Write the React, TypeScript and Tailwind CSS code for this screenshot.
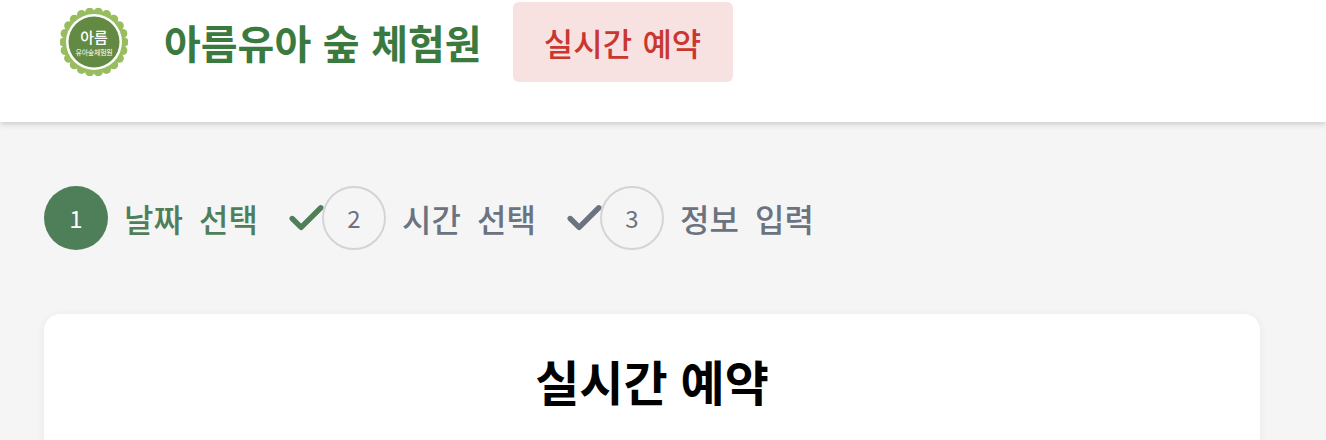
import { Check } from "lucide-react";

const font = "font-['Noto_Sans_CJK_KR','Noto_Sans',sans-serif]";

const steps = [
  { n: 1, label: "날짜 선택", active: true },
  { n: 2, label: "시간 선택", active: false },
  { n: 3, label: "정보 입력", active: false },
];

// scalloped badge edge
const bumps = Array.from({ length: 22 }, (_, i) => {
  const a = (i / 22) * Math.PI * 2;
  return { x: 34 + 30 * Math.cos(a), y: 34 + 30 * Math.sin(a) };
});

function Logo() {
  return (
    <svg width="68" height="68" viewBox="0 0 68 68">
      <circle cx="34" cy="34" r="30" fill="#98bd5e" />
      {bumps.map((b, i) => (
        <circle key={i} cx={b.x} cy={b.y} r="4.6" fill="#98bd5e" />
      ))}
      <circle cx="34" cy="34" r="28" fill="#ffffff" />
      <circle cx="34" cy="34" r="25.5" fill="#638a42" />
      <text x="34" y="35" textAnchor="middle" fill="#fff" fontSize="15" fontWeight="500">아름</text>
      <text x="34" y="47" textAnchor="middle" fill="#fff" fontSize="7" letterSpacing="-0.3">유아숲체험원</text>
    </svg>
  );
}

export default function App() {
  return (
    <div className={`h-[440px] overflow-hidden bg-[#f5f5f5] ${font}`}>
      <header className="flex h-[122px] items-start bg-white pl-[60px] shadow-[0_2px_6px_rgba(0,0,0,0.18)]">
        <div className="mt-[8px]"><Logo /></div>
        <h1 className="mt-[14px] ml-[36px] text-[40px] leading-[56px] font-semibold text-[#3a7a3f] [word-spacing:2.5px]">아름유아 숲 체험원</h1>
        <div className="mt-[2px] ml-[31px] flex h-[80px] w-[220px] items-center justify-center rounded-md bg-[#f8e1e1] text-[32px] font-medium text-[#c9372f] [word-spacing:3px]">
          실시간 예약
        </div>
      </header>
      <main className="px-[44px]">
        <div className="mt-[64px] flex items-center">
          {steps.map((s) => (
            <div key={s.n} className="flex items-center">
              <div className={`flex h-[64px] w-[64px] items-center justify-center rounded-full text-[24px] ${s.active ? "bg-[#4f7f58] text-white" : "border-2 border-[#d4d4d8] text-[#6b7280]"}`}>
                {s.n}
              </div>
              <span className={`ml-[16px] text-[32px] leading-[44px] font-medium [word-spacing:9px] ${s.active ? "text-[#4f7f58]" : "text-[#6b7280]"}`}>{s.label}</span>
              {s.n < 3 && <Check className={`ml-[27px] -mr-[6px] h-[43px] w-[43px] ${s.active ? "text-[#4f7f58]" : "text-[#6b7280]"}`} strokeWidth={3} />}
            </div>
          ))}
        </div>
        <section className="mt-[64px] h-[200px] w-[1216px] rounded-[16px] bg-white pt-[32px] text-center shadow-[0_2px_8px_rgba(0,0,0,0.06)]">
          <h2 className="text-[48px] leading-[68px] font-semibold text-black [word-spacing:2px]">실시간 예약</h2>
        </section>
      </main>
    </div>
  );
}
